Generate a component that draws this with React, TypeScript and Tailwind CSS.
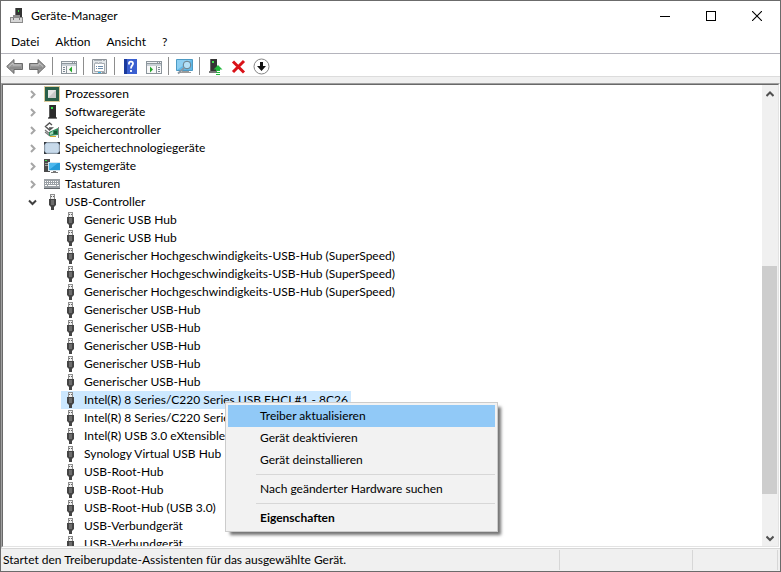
import type { ReactNode } from 'react';

interface Category {
  name: string;
  icon: ReactNode;
}

const SELECTED = 10;

const PcTower = () => (
  <svg className="h-4 w-4" viewBox="0 0 16 16" aria-hidden="true">
    <path d="M5 1h7v13H5z" fill="#2b2b2b" />
    <path d="M5 1h1v13H5z" fill="#5a5a5a" />
    <rect x="7" y="3" width="2" height="2" fill="#33e04a" />
    <path d="M4 13h9v2H4z" fill="#7b7b7b" />
    <path d="M5 13h7v1H5z" fill="#2b2b2b" />
  </svg>
);

const UsbPlug = () => (
  <svg className="h-4 w-4" viewBox="0 0 16 16" aria-hidden="true">
    <path d="M6 0h5v6H6z" fill="#8f8f8f" />
    <path d="M7 1h3v4H7z" fill="#efefef" />
    <path d="M7 2h1v1H7zM9 2h1v1H9z" fill="#666" />
    <path d="M5 5h7v6l-1 1-1 1v3H7v-3l-1-1-1-1z" fill="#444" />
    <path d="M7 6h3v5H7z" fill="#6d6d6d" />
  </svg>
);

const categories: Category[] = [
  {
    name: 'Prozessoren',
    icon: (
      <svg className="h-4 w-4" viewBox="0 0 16 16" aria-hidden="true">
        <rect x="0.5" y="0.5" width="15" height="15" fill="none" stroke="#b8983c" strokeDasharray="1 1" />
        <rect x="1" y="1" width="14" height="14" fill="#2a5f49" />
        <rect x="4" y="4" width="8" height="8" fill="#c9c9c9" />
        <path d="M4 12V4h8z" fill="#e6e6e6" />
      </svg>
    ),
  },
  { name: 'Softwaregeräte', icon: <PcTower /> },
  {
    name: 'Speichercontroller',
    icon: (
      <svg className="h-4 w-4" viewBox="0 0 16 16" aria-hidden="true">
        <path d="M8 3L5.500 1 1.500 4.500 5.500 8 8 6H5" fill="none" stroke="#555" strokeWidth="1.400" />
        <path d="M1 8l5 4M1 10l5 4" fill="none" stroke="#777" strokeWidth="1.200" />
        <path d="M5 10l9-4v7l-9 1z" fill="#2f8a5b" />
        <path d="M6 11l3-2v3l-3 1z" fill="#a5d6b8" />
        <path d="M10 9h3v3h-3z" fill="#1b5636" />
        <path d="M6 14h6v1H6z" fill="#d5a92c" />
        <path d="M14.500 5v11" stroke="#8a8a8a" />
      </svg>
    ),
  },
  {
    name: 'Speichertechnologiegeräte',
    icon: (
      <svg className="h-4 w-4" viewBox="0 0 16 16" aria-hidden="true">
        <rect x="0" y="2" width="16" height="12" rx="1" fill="#8e9aa5" />
        <rect x="1" y="3" width="14" height="10" rx="1" fill="#b9cde0" />
        <path d="M2 4h12v8H2z" fill="#c8daea" />
        <path d="M0 2h3L0 5zM16 2h-3l3 3zM0 14v-3l3 3zM16 14v-3l-3 3z" fill="#343a40" />
      </svg>
    ),
  },
  {
    name: 'Systemgeräte',
    icon: (
      <svg className="h-4 w-4" viewBox="0 0 16 16" aria-hidden="true">
        <path d="M0 1h6v13H0z" fill="#4a4a4a" />
        <path d="M1 5h3v1H1zM1 7h3v1H1z" fill="#a0a0a0" />
        <path d="M1 2h2v1H1z" fill="#42e04e" />
        <path d="M4 4h12v9H4z" fill="#d3e6f0" />
        <path d="M5 5h11v7H5z" fill="#259bd8" />
        <path d="M5 12V5h9z" fill="#4db8ee" />
        <path d="M9 13h3v1h2v1H7v-1h2z" fill="#777" />
      </svg>
    ),
  },
  {
    name: 'Tastaturen',
    icon: (
      <svg className="h-4 w-4" viewBox="0 0 16 16" aria-hidden="true">
        <rect x="0" y="3" width="16" height="10" fill="#9aa0a5" />
        <path d="M0 12h16v1H0z" fill="#63686d" />
        <path d="M1 5.500h14M1 7.500h14" stroke="#fff" strokeDasharray="1 1" />
        <path d="M1 9.500h2M4 9.500h8M13 9.500h2" stroke="#fff" />
      </svg>
    ),
  },
];

const usbDevices = [
  'Generic USB Hub',
  'Generic USB Hub',
  'Generischer Hochgeschwindigkeits-USB-Hub (SuperSpeed)',
  'Generischer Hochgeschwindigkeits-USB-Hub (SuperSpeed)',
  'Generischer Hochgeschwindigkeits-USB-Hub (SuperSpeed)',
  'Generischer USB-Hub',
  'Generischer USB-Hub',
  'Generischer USB-Hub',
  'Generischer USB-Hub',
  'Generischer USB-Hub',
  'Intel(R) 8 Series/C220 Series USB EHCI #1 - 8C26',
  'Intel(R) 8 Series/C220 Series',
  'Intel(R) USB 3.0 eXtensible-',
  'Synology Virtual USB Hub',
  'USB-Root-Hub',
  'USB-Root-Hub',
  'USB-Root-Hub (USB 3.0)',
  'USB-Verbundgerät',
  'USB-Verbundgerät',
];

function TitleBar() {
  return (
    <header className="flex h-[30px] shrink-0 items-center pl-[9px]">
      <svg className="h-4 w-4" viewBox="0 0 16 16" aria-hidden="true">
        <path d="M5 0h7v10H5z" fill="#333" />
        <path d="M5 0h1v9H5z" fill="#777" />
        <path d="M8 2h1v2H8z" fill="#3fdf4c" />
        <path d="M3 7h7v2H3z" fill="#8e8e8e" />
        <path d="M0 9h13v6H0z" fill="#8b8b8b" />
        <path d="M1 10h11v4H1z" fill="#d6d6d6" />
        <path d="M3 10h1v2H3zM9 10h1v2H9z" fill="#777" />
      </svg>
      <h1 className="flex-1 pl-[5px]">Geräte-Manager</h1>
      <button type="button" aria-label="Minimieren" className="flex h-full w-[46px] items-center justify-center">
        <svg className="h-[10px] w-[10px]" viewBox="0 0 10 10">
          <path d="M0 5h10v1H0z" />
        </svg>
      </button>
      <button type="button" aria-label="Maximieren" className="flex h-full w-[46px] items-center justify-center">
        <svg className="h-[10px] w-[10px]" viewBox="0 0 10 10">
          <rect x="0.500" y="0.500" width="9" height="9" fill="none" stroke="#000" />
        </svg>
      </button>
      <button type="button" aria-label="Schließen" className="flex h-full w-[46px] items-center justify-center">
        <svg className="h-[10px] w-[10px]" viewBox="0 0 10 10">
          <path d="M0 0l10 10M10 0L0 10" stroke="#000" strokeWidth="1.100" />
        </svg>
      </button>
    </header>
  );
}

function ToolButton({ label, children }: { label: string; children: ReactNode }) {
  return (
    <button type="button" aria-label={label} className="flex h-full w-[23px] items-center justify-center">
      <svg className="h-[17px] w-[17px]" viewBox="0 0 17 17">
        {children}
      </svg>
    </button>
  );
}

const Divider = () => <span className="mr-1 ml-[3px] h-[18px] w-px bg-[#8d8d8d]" />;

const Panes = () => (
  <>
    <path d="M1 3h16v13H1z" fill="#8c959c" />
    <path d="M2 4h10v1H2zM13 4h1v1h-1zM15 4h1v1h-1z" fill="#eef1f3" />
    <path d="M2 6h14v2H2z" fill="#c9d0d6" />
  </>
);

function Toolbar() {
  return (
    <div role="toolbar" className="flex h-[23px] shrink-0 items-center border-b border-[#dcdcdc] pt-[2px] pl-[2px]">
      <ToolButton label="Zurück">
        <path d="M0.700 8.500L8 1.500V5.500h8.500v6H8V15.500z" fill="#9a9a9a" stroke="#6b6b6b" />
        <path d="M3 8.500L7 5v2h8" fill="none" stroke="#c4c4c4" />
        <path d="M4 10h11" stroke="#808080" />
      </ToolButton>
      <ToolButton label="Vorwärts">
        <path d="M16.300 8.500L9 1.500V5.500H.5v6H9V15.500z" fill="#9a9a9a" stroke="#6b6b6b" />
        <path d="M2 7h8V5l4 3.500" fill="none" stroke="#c4c4c4" />
        <path d="M2 10h11" stroke="#808080" />
      </ToolButton>
      <Divider />
      <ToolButton label="Konsolenstruktur">
        <Panes />
        <path d="M2 8h4v7H2zM7 8h9v7H7z" fill="#f8f8f8" />
        <path d="M3 9h2v1H3zM3 11h2v1H3zM3 13h2v1H3z" fill="#7a8794" />
        <path d="M12 8.500v6l-3-3z" fill="#25a52b" />
      </ToolButton>
      <Divider />
      <ToolButton label="Eigenschaften">
        <path d="M1.500 1.500h14v14h-14z" fill="#e4e8eb" stroke="#8c9298" />
        <path d="M3 2h8v1H3zM12 2h2v1h-2z" fill="#a9b0b6" />
        <path d="M3.500 5.500h10v8h-10z" fill="#fff" stroke="#a6abb0" />
        <path d="M4 4h3v2H4zM8 4h3v2H8z" fill="#b8bec4" />
        <path d="M5 8h1v1H5zM7 8h5v1H7zM5 10h1v1H5zM7 10h5v1H7z" fill="#6c8cab" />
        <path d="M7 14h3v1H7z" fill="#36b7ee" />
        <path d="M11 14h3v1h-3z" fill="#98a0a7" />
      </ToolButton>
      <Divider />
      <ToolButton label="Hilfe">
        <path d="M2 1h13v15H2z" fill="#3a5fd0" />
        <path d="M2 1h3v15H2z" fill="#1b3a9c" />
        <path d="M7 6.500V5c0-2 4-2 4 .5 0 2-2 2-2 5M9 12v2" fill="none" stroke="#fff" strokeWidth="1.800" />
      </ToolButton>
      <ToolButton label="Aktionsbereich">
        <Panes />
        <path d="M2 8h9v7H2zM12 8h4v7h-4z" fill="#f8f8f8" />
        <path d="M13 9h2v1h-2zM13 11h2v1h-2zM13 13h2v1h-2z" fill="#7a8794" />
        <path d="M5 8.500v6l3-3z" fill="#25a52b" />
      </ToolButton>
      <Divider />
      <ToolButton label="Nach geänderter Hardware suchen">
        <path d="M.5 1.500h16v11H.5z" fill="#62b9e8" stroke="#4c9ac4" />
        <path d="M1 12V2h14z" fill="#8dcff2" />
        <path d="M6 13h7v1H6zM4 14h11v1H4z" fill="#9b9b9b" />
        <circle cx="11" cy="7" r="3.800" fill="#b4e0f7" stroke="#6a7d88" />
        <path d="M8 10l-6 5.500" stroke="#8b96a0" strokeWidth="1.800" />
      </ToolButton>
      <Divider />
      <ToolButton label="Treiber aktualisieren">
        <path d="M3 1h7v12H3z" fill="#353535" />
        <path d="M3 1h1v12H3z" fill="#6a6a6a" />
        <path d="M5 3h2v2H5z" fill="#42e04e" />
        <path d="M2 13h8v2H2z" fill="#777" />
        <path d="M11 7l4.500 4.500H13V13H9v-1.500H6.500zM9 14h4v1H9zM9 16h4v1H9z" fill="#22b83c" />
      </ToolButton>
      <ToolButton label="Deinstallieren">
        <path d="M3 3.500l11 11M14 3L3 14" stroke="#d91218" strokeWidth="3" />
      </ToolButton>
      <ToolButton label="Deaktivieren">
        <circle cx="8.500" cy="8.500" r="7.500" fill="#fff" stroke="#858585" />
        <path d="M7 4h3v4h3L8.500 13 4 8h3z" fill="#111" />
      </ToolButton>
    </div>
  );
}

function ContextMenu() {
  const item = 'flex h-[22px] w-full items-center pl-8 text-left';
  return (
    <div
      role="menu"
      className="absolute top-[11px] left-[164px] z-10 w-[273px] border border-[#ccc] bg-[#f2f2f2] p-[2px] shadow-[4px_4px_3px_-1px_rgba(0,0,0,0.55)]"
    >
      <button type="button" role="menuitem" className={`${item} bg-[#91c9f7]`}>
        Treiber aktualisieren
      </button>
      <button type="button" role="menuitem" className={item}>
        Gerät deaktivieren
      </button>
      <button type="button" role="menuitem" className={item}>
        Gerät deinstallieren
      </button>
      <hr className="my-[3px] ml-7 border-[#d7d7d7]" />
      <button type="button" role="menuitem" className={item}>
        Nach geänderter Hardware suchen
      </button>
      <hr className="my-[3px] ml-7 border-[#d7d7d7]" />
      <button type="button" role="menuitem" className={`${item} font-bold`}>
        Eigenschaften
      </button>
    </div>
  );
}

function DeviceTree() {
  return (
    <ul role="tree" className="min-w-0 flex-1 overflow-hidden">
      {categories.map(({ name, icon }) => (
        <li key={name} role="treeitem" aria-expanded="false" className="flex h-[18px] items-center pl-[25px]">
          <svg className="mr-[6px] h-[10px] w-[10px]" viewBox="0 0 10 10" aria-hidden="true">
            <path d="M3 2L6.500 5.500 3 9" fill="none" stroke="#a6a6a6" strokeWidth="2" />
          </svg>
          {icon}
          <span className="pl-[5px] whitespace-nowrap">{name}</span>
        </li>
      ))}
      <li role="treeitem" aria-expanded="true">
        <div className="flex h-[18px] items-center pl-[25px]">
          <svg className="mr-[6px] h-[10px] w-[10px]" viewBox="0 0 10 10" aria-hidden="true">
            <path d="M1 3.500l3.500 3.500L8 3.500" fill="none" stroke="#404040" strokeWidth="2" />
          </svg>
          <UsbPlug />
          <span className="pl-[5px]">USB-Controller</span>
        </div>
        <ul role="group" className="pl-[58px]">
          {usbDevices.map((name, i) => (
            <li key={i} role="treeitem" aria-selected={i === SELECTED} className="relative flex h-[18px]">
              <span
                className={`flex items-center pr-[3px] pl-px whitespace-nowrap ${i === SELECTED ? 'bg-[#cce8ff]' : ''}`}
              >
                <UsbPlug />
                <span className="pl-[6px]">{name}</span>
              </span>
              {i === SELECTED && <ContextMenu />}
            </li>
          ))}
        </ul>
      </li>
    </ul>
  );
}

function ScrollBar() {
  return (
    <div className="flex w-4 shrink-0 flex-col bg-[#f0f0f0]">
      <button type="button" aria-label="Nach oben" className="flex h-[17px] items-center justify-center">
        <svg className="h-[8px] w-[8px]" viewBox="0 0 8 8">
          <path d="M0.500 6L4 2.500 7.500 6" fill="none" stroke="#505050" strokeWidth="2" />
        </svg>
      </button>
      <div className="flex-[164]" />
      <div className="mr-px flex-[227] bg-[#cdcdcd]" />
      <div className="flex-[35]" />
      <button type="button" aria-label="Nach unten" className="flex h-[17px] items-center justify-center">
        <svg className="h-[8px] w-[8px]" viewBox="0 0 8 8">
          <path d="M0.500 2.500L4 6 7.500 2.500" fill="none" stroke="#505050" strokeWidth="2" />
        </svg>
      </button>
    </div>
  );
}

export default function App() {
  return (
    <div className="flex h-screen flex-col overflow-hidden border border-[#6b6b6b] bg-white font-['Lato','Open_Sans',sans-serif] text-[12px] leading-[18px] text-black">
      <TitleBar />
      <nav className="flex h-[23px] shrink-0 items-center gap-4 border-b border-[#b4b4bc] pl-[10px]">
        <button type="button">Datei</button>
        <button type="button">Aktion</button>
        <button type="button">Ansicht</button>
        <button type="button">?</button>
      </nav>
      <Toolbar />
      <main className="flex min-h-0 flex-1 flex-col bg-[#f0f0f0] pt-[6px]">
        <div className="flex min-h-0 flex-1 border border-t-[#a0a0a0] border-r-white border-b-white border-l-[#a0a0a0]">
          <div className="flex min-w-0 flex-1 border border-t-[#696969] border-r-[#e3e3e3] border-b-[#e3e3e3] border-l-[#696969] bg-white">
            <DeviceTree />
            <ScrollBar />
          </div>
        </div>
      </main>
      <footer className="flex h-[23px] shrink-0 border-t border-[#d7d7d7] bg-[#f0f0f0] pr-[2px]">
        <p className="my-px flex flex-1 items-center border-r border-[#d7d7d7] pl-[2px]">
          Startet den Treiberupdate-Assistenten für das ausgewählte Gerät.
        </p>
        <span className="my-px w-[133px] border-r border-[#d7d7d7]" />
        <span className="my-px w-[85px] border-r border-[#d7d7d7]" />
      </footer>
    </div>
  );
}
